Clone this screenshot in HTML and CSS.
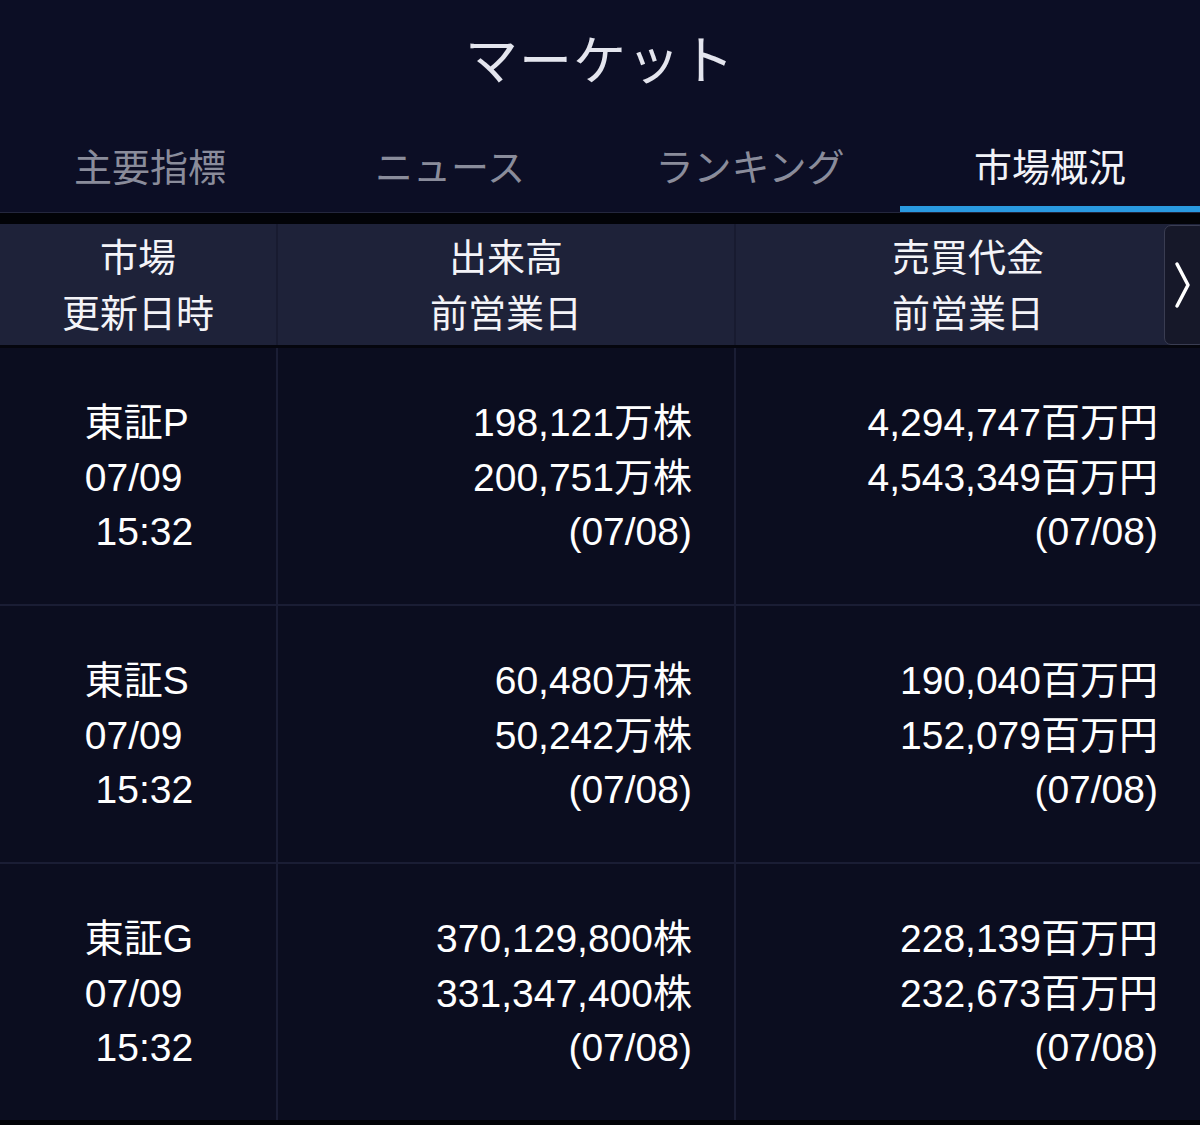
FILE: index.html
```html
<!DOCTYPE html>
<html lang="ja">
<head>
<meta charset="utf-8">
<title>マーケット</title>
<link rel="stylesheet" href="styles.css">
</head>
<body>
<div class="app">
  <div class="topbar">
    <h1 class="title">マーケット</h1>
    <nav class="tabs">
      <div class="tab">主要指標</div>
      <div class="tab">ニュース</div>
      <div class="tab">ランキング</div>
      <div class="tab active">市場概況</div>
    </nav>
  </div>

  <div class="table">
    <div class="thead">
      <div class="th"><span>市場</span><span>更新日時</span></div>
      <div class="th"><span>出来高</span><span>前営業日</span></div>
      <div class="th"><span>売買代金</span><span>前営業日</span></div>
      <div class="more">
        <svg width="18" height="50" viewBox="0 0 18 50"><path d="M3 4 L14 25 L3 46" fill="none" stroke="#ffffff" stroke-width="3.5" stroke-linecap="round" stroke-linejoin="round"/></svg>
      </div>
    </div>

    <div class="tbody">
      <div class="td market"><div class="mk"><span>東証P</span><span>07/09</span><span> 15:32</span></div></div>
      <div class="td num"><span>198,121万株</span><span>200,751万株</span><span>(07/08)</span></div>
      <div class="td num"><span>4,294,747百万円</span><span>4,543,349百万円</span><span>(07/08)</span></div>

      <div class="td market"><div class="mk"><span>東証S</span><span>07/09</span><span> 15:32</span></div></div>
      <div class="td num"><span>60,480万株</span><span>50,242万株</span><span>(07/08)</span></div>
      <div class="td num"><span>190,040百万円</span><span>152,079百万円</span><span>(07/08)</span></div>

      <div class="td market"><div class="mk"><span>東証G</span><span>07/09</span><span> 15:32</span></div></div>
      <div class="td num"><span>370,129,800株</span><span>331,347,400株</span><span>(07/08)</span></div>
      <div class="td num"><span>228,139百万円</span><span>232,673百万円</span><span>(07/08)</span></div>
    </div>
  </div>
</div>
</body>
</html>
```

FILE: styles.css
```css
* { box-sizing: border-box; }

html, body {
  margin: 0;
  padding: 0;
  background: #020307;
}

body {
  font-family: "Liberation Sans", "Noto Sans CJK JP", sans-serif;
  color: #ffffff;
  width: 1200px;
}

.app {
  width: 1200px;
  height: 1125px;
  overflow: hidden;
}

.topbar {
  background: #0c0e25;
}

.title {
  margin: 0;
  height: 120px;
  padding-top: 4px;
  line-height: 116px;
  text-align: center;
  font-size: 53px;
  font-weight: 400;
  color: #e4e5ee;
  letter-spacing: 1px;
}

.tabs {
  display: grid;
  grid-template-columns: repeat(4, 1fr);
  border-bottom: 1px solid #24273d;
}

.tab {
  padding-top: 24px;
  height: 92px;
  line-height: 48px;
  font-size: 38px;
  text-align: center;
  color: #8a8c9b;
  border-bottom: 6px solid transparent;
}

.tab.active {
  color: #f2f3f8;
  border-bottom-color: #2a9ae0;
}

.table {
  margin-top: 11px;
}

.thead {
  position: relative;
  display: grid;
  grid-template-columns: 276px 456px 1fr;
  column-gap: 2px;
  height: 124px;
  background: #181b30;
  border-bottom: 3px solid #05060e;
}

.th {
  background: #1e2239;
  display: flex;
  flex-direction: column;
  align-items: center;
  justify-content: center;
  padding-top: 2px;
  font-size: 38px;
  line-height: 56px;
  color: #f4f4f8;
}

.more {
  position: absolute;
  right: -6px;
  top: 1px;
  width: 42px;
  height: 120px;
  background: #161829;
  border: 1px solid #3a3d52;
  border-radius: 7px;
  display: flex;
  align-items: center;
  padding-left: 9px;
}

.tbody {
  display: grid;
  grid-template-columns: 276px 456px 1fr;
  grid-auto-rows: 256px;
  gap: 2px;
  background: #1a1d34;
}

.td {
  background: #0b0d1f;
  display: flex;
  flex-direction: column;
  justify-content: center;
  padding-top: 4px;
  font-size: 39px;
  line-height: 54.5px;
  color: #ffffff;
}

.td.market {
  align-items: center;
}

.mk {
  display: flex;
  flex-direction: column;
  white-space: pre;
  padding-left: 2px;
}

.td.num {
  align-items: flex-end;
  padding-right: 42px;
}
```
